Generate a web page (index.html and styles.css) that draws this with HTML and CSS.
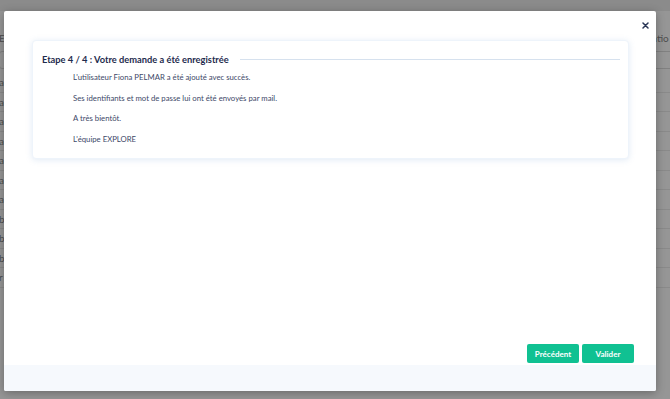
FILE: index.html
```html
<!DOCTYPE html>
<html lang="fr">
<head>
<meta charset="utf-8">
<link rel="stylesheet" href="styles.css">
</head>
<body>
<div class="page">
  <div class="page-top"></div>
  <div class="page-main">
    <div class="page-col left">
      <div class="head">E</div>
      <div class="field"></div>
      <div class="row">a</div><div class="row">a</div><div class="row">a</div><div class="row">a</div><div class="row">a</div><div class="row">a</div><div class="row">a</div><div class="row">b</div><div class="row">b</div><div class="row">b</div><div class="row">r</div>
    </div>
    <div class="page-col right">
      <div class="head">atio</div>
      <div class="field"></div>
      <div class="row"></div><div class="row"></div><div class="row"></div><div class="row"></div><div class="row"></div><div class="row"></div><div class="row"></div><div class="row"></div><div class="row"></div><div class="row"></div><div class="row"></div>
    </div>
  </div>
</div>
<div class="overlay"></div>
<div class="modal">
  <button class="close" aria-label="Fermer">
    <svg width="7" height="7" viewBox="0 0 7 7"><path d="M1 1 L6 6 M6 1 L1 6" stroke="#2a3656" stroke-width="1.5" stroke-linecap="round"/></svg>
  </button>
  <div class="modal-body">
    <section class="card">
      <div class="card-title">
        <h2>Etape 4 / 4 : Votre demande a été enregistrée</h2>
        <span class="rule"></span>
      </div>
      <div class="card-text">
        <p>L'utilisateur Fiona PELMAR a été ajouté avec succès.</p>
        <p>Ses identifiants et mot de passe lui ont été envoyés par mail.</p>
        <p>A très bientôt.</p>
        <p>L'équipe EXPLORE</p>
      </div>
    </section>
    <div class="actions">
      <button class="btn">Précédent</button>
      <button class="btn">Valider</button>
    </div>
  </div>
  <div class="modal-footer"></div>
</div>
</body>
</html>
```

FILE: styles.css
```css
* { box-sizing: border-box; }
html, body {
  margin: 0;
  padding: 0;
  width: 670px;
  height: 399px;
  overflow: hidden;
  font-family: Lato, "Open Sans", sans-serif;
}
.page {
  width: 670px;
  height: 399px;
  background: #ffffff;
  display: flex;
  flex-direction: column;
}
.page-top {
  height: 11px;
  background: #ececec;
}
.page-main {
  flex: 1;
  display: flex;
  justify-content: space-between;
  padding-top: 16px;
}
.page-col {
  width: 40px;
  display: flex;
  flex-direction: column;
  font-size: 10px;
  color: #888;
}
.page-col.left { margin-left: -4px; padding-left: 3px; }
.page-col.right { padding-left: 22px; width: 60px; margin-right: -20px; }
.page-col .head { height: 22px; line-height: 22px; }
.page-col .field {
  height: 18px;
  border: 1px solid #dcdcdc;
  border-radius: 3px;
  margin: 2px 0 4px;
}
.page-col .row {
  height: 19.5px;
  line-height: 19px;
  border-bottom: 1px solid #ebebeb;
}
.overlay {
  position: absolute;
  inset: 0;
  background: rgba(0, 0, 0, 0.41);
}
.modal {
  position: absolute;
  left: 4px;
  top: 11px;
  width: 652px;
  height: 380px;
  background: #ffffff;
  border-radius: 2px;
  box-shadow: 0 2px 10px rgba(0, 0, 0, 0.3);
  display: flex;
  flex-direction: column;
}
.close {
  position: absolute;
  right: 6px;
  top: 9px;
  width: 10px;
  height: 10px;
  padding: 0;
  border: none;
  background: transparent;
  display: flex;
  align-items: center;
  justify-content: center;
}
.modal-body {
  flex: 1;
  display: flex;
  flex-direction: column;
  justify-content: space-between;
  padding: 29px 22px 2px 28px;
}
.card {
  margin-right: 5px;
  height: 119px;
  background: #ffffff;
  border: 1px solid #eef4fb;
  border-radius: 4px;
  box-shadow: 0 1px 6px rgba(120, 160, 210, 0.22);
  padding: 11px 8px 0 9px;
}
.card-title {
  display: flex;
  align-items: center;
  gap: 11px;
  height: 14px;
}
.card-title h2 {
  margin: 0;
  font-size: 9.3px;
  font-weight: 700;
  color: #1e2b4d;
  white-space: nowrap;
}
.card-title .rule {
  flex: 1;
  height: 1px;
  background: #d6e1ee;
}
.card-text {
  padding-left: 31px;
  padding-top: 5px;
}
.card-text p {
  margin: 0;
  height: 20.6px;
  line-height: 12px;
  font-size: 7.75px;
  color: #3d4868;
}
.actions {
  display: flex;
  justify-content: flex-end;
  gap: 3px;
}
.btn {
  width: 52px;
  height: 19px;
  border: none;
  border-radius: 2px;
  background: #10c192;
  color: #ffffff;
  font-family: Lato, "Open Sans", sans-serif;
  font-size: 8px;
  font-weight: 700;
  padding: 0;
}
.modal-footer {
  height: 26px;
  background: #f6f9fd;
  border-radius: 0 0 2px 2px;
}
```
